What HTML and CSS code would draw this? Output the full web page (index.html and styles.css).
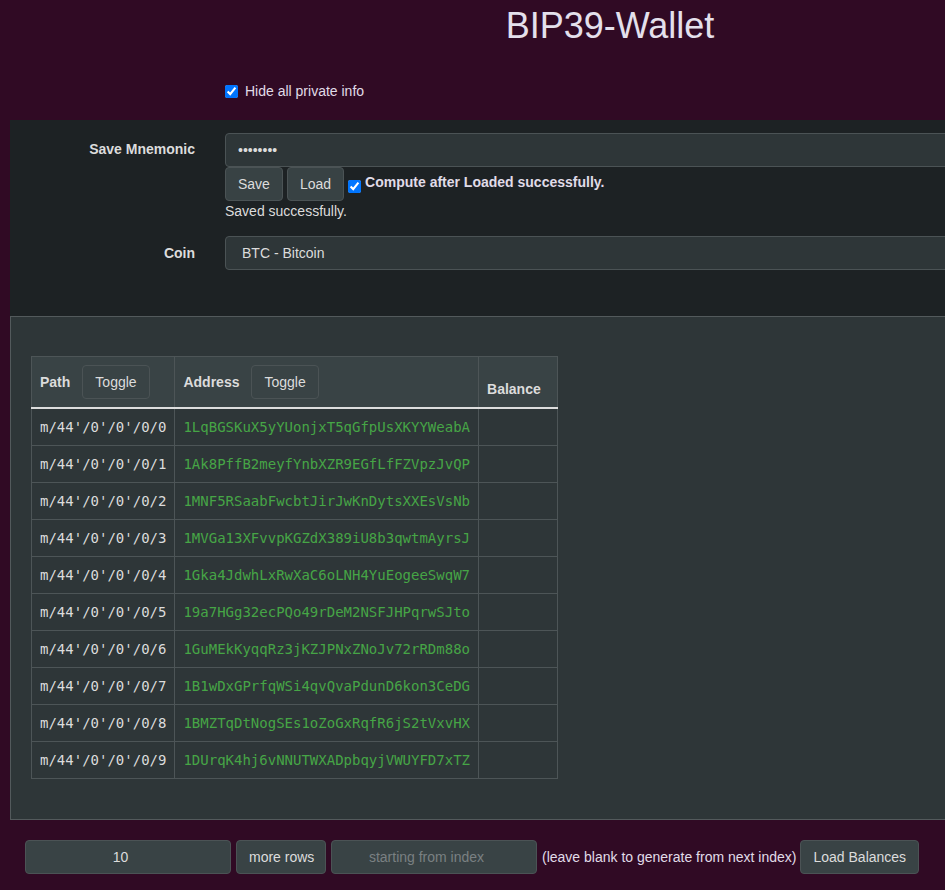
FILE: index.html
```html
<!DOCTYPE html>
<html>
<head>
<meta charset="utf-8">
<title>BIP39-Wallet</title>
<link rel="stylesheet" href="styles.css">
</head>
<body>
<div class="viewport">
  <div class="page">
    <h1 class="title">BIP39-Wallet</h1>
    <div class="hide-row">
      <label class="check"><input type="checkbox" checked>Hide all private info</label>
    </div>

    <div class="panel form-panel">
      <div class="form-row first">
        <div class="form-label">Save Mnemonic</div>
        <div class="field">
          <input class="control" type="password" value="password">
          <div class="actions">
            <button class="btn">Save</button>
            <button class="btn">Load</button>
            <label class="inline-check"><input type="checkbox" checked>Compute after Loaded successfully.</label>
          </div>
          <div class="status">Saved successfully.</div>
        </div>
      </div>
      <div class="form-row">
        <div class="form-label centered">Coin</div>
        <div class="field">
          <select class="control select">
            <option>BTC - Bitcoin</option>
          </select>
        </div>
      </div>
    </div>

    <div class="panel table-panel">
      <table class="addresses">
        <thead>
          <tr>
            <th class="col-path"><span class="th-label">Path</span><button class="btn toggle">Toggle</button></th>
            <th class="col-address"><span class="th-label">Address</span><button class="btn toggle">Toggle</button></th>
            <th class="col-balance">Balance</th>
          </tr>
        </thead>
        <tbody>
          <tr><td class="mono">m/44'/0'/0'/0/0</td><td class="mono addr">1LqBGSKuX5yYUonjxT5qGfpUsXKYYWeabA</td><td></td></tr>
          <tr><td class="mono">m/44'/0'/0'/0/1</td><td class="mono addr">1Ak8PffB2meyfYnbXZR9EGfLfFZVpzJvQP</td><td></td></tr>
          <tr><td class="mono">m/44'/0'/0'/0/2</td><td class="mono addr">1MNF5RSaabFwcbtJirJwKnDytsXXEsVsNb</td><td></td></tr>
          <tr><td class="mono">m/44'/0'/0'/0/3</td><td class="mono addr">1MVGa13XFvvpKGZdX389iU8b3qwtmAyrsJ</td><td></td></tr>
          <tr><td class="mono">m/44'/0'/0'/0/4</td><td class="mono addr">1Gka4JdwhLxRwXaC6oLNH4YuEogeeSwqW7</td><td></td></tr>
          <tr><td class="mono">m/44'/0'/0'/0/5</td><td class="mono addr">19a7HGg32ecPQo49rDeM2NSFJHPqrwSJto</td><td></td></tr>
          <tr><td class="mono">m/44'/0'/0'/0/6</td><td class="mono addr">1GuMEkKyqqRz3jKZJPNxZNoJv72rRDm88o</td><td></td></tr>
          <tr><td class="mono">m/44'/0'/0'/0/7</td><td class="mono addr">1B1wDxGPrfqWSi4qvQvaPdunD6kon3CeDG</td><td></td></tr>
          <tr><td class="mono">m/44'/0'/0'/0/8</td><td class="mono addr">1BMZTqDtNogSEs1oZoGxRqfR6jS2tVxvHX</td><td></td></tr>
          <tr><td class="mono">m/44'/0'/0'/0/9</td><td class="mono addr">1DUrqK4hj6vNNUTWXADpbqyjVWUYFD7xTZ</td><td></td></tr>
        </tbody>
      </table>
    </div>

    <div class="footer-row">
      <input class="control small center" type="number" value="10">
      <button class="btn more">more rows</button>
      <input class="control small center" type="number" placeholder="starting from index">
      <span class="hint">(leave blank to generate from next index)</span>
      <button class="btn load-bal">Load Balances</button>
    </div>
  </div>
</div>
</body>
</html>
```

FILE: styles.css
```css
html, body {
  margin: 0;
  padding: 0;
  background: #300a24;
}

body {
  font-family: "Liberation Sans", Arial, sans-serif;
  font-size: 14px;
  line-height: 20px;
  color: #dcdcdc;
}

.viewport {
  width: 100%;
  height: 890px;
  overflow: hidden;
}

.page {
  width: 1220px;
}

.title {
  margin: 6px 0 0;
  font-size: 36px;
  line-height: 40px;
  font-weight: normal;
  text-align: center;
  color: #e4e0ec;
}

.hide-row {
  margin-top: 35px;
  padding-left: 225px;
  height: 20px;
}

.check {
  display: inline-flex;
  align-items: center;
  color: #e0dce8;
}

.check input {
  margin: 0 7px 0 0;
  width: 13px;
  height: 13px;
}

.panel {
  margin: 0 10px;
}

.form-panel {
  margin-top: 19px;
  background: #1d2224;
  padding: 13px 0 46px;
}

.form-row {
  display: flex;
  margin-top: 15px;
}

.form-row.first {
  margin-top: 0;
}

.form-label {
  width: 185px;
  flex: none;
  text-align: right;
  font-weight: bold;
  padding-top: 6px;
  color: #dcdcdc;
}

.form-label.centered {
  padding-top: 7px;
}

.field {
  margin-left: 30px;
  flex: 1;
}

.control {
  box-sizing: border-box;
  display: block;
  width: 100%;
  height: 34px;
  padding: 6px 12px;
  background: #2e3638;
  border: 1px solid #4b5355;
  border-radius: 4px;
  color: #dcdcdc;
  font-family: "Liberation Sans", Arial, sans-serif;
  font-size: 14px;
  line-height: 20px;
  outline: none;
}

.select {
  -webkit-appearance: none;
  appearance: none;
  padding-left: 16px;
}

.btn {
  box-sizing: border-box;
  height: 34px;
  padding: 6px 12px;
  background: #384244;
  border: 1px solid #4b5355;
  border-radius: 4px;
  color: #dcdcdc;
  font-family: "Liberation Sans", Arial, sans-serif;
  font-size: 14px;
  line-height: 20px;
  white-space: nowrap;
  cursor: pointer;
}

.actions {
  display: flex;
  align-items: flex-start;
  gap: 4px;
}

.inline-check {
  display: inline-flex;
  align-items: flex-start;
  font-weight: bold;
  padding-top: 5px;
  color: #e0dce8;
}

.inline-check input {
  margin: 8px 4px 0 0;
  width: 13px;
  height: 13px;
}

.status {
  margin-top: 0;
}

.table-panel {
  background: #2e3638;
  border: 1px solid #535a5c;
  padding: 39px 20px 40px 20px;
}

.addresses {
  border-collapse: collapse;
  border: 1px solid #4d5557;
}

.addresses th,
.addresses td {
  border: 1px solid #4d5557;
  padding: 8px;
  text-align: left;
}

.addresses thead th {
  background: #394345;
  vertical-align: bottom;
  font-weight: bold;
  color: #dcdcdc;
  border-bottom: 2px solid #dddddd;
  white-space: nowrap;
}

.th-label {
  display: inline-block;
}

.toggle {
  margin-left: 12px;
  background: #394345;
}

.col-balance {
  width: 62px;
}

.addresses tbody td {
  height: 20px;
}

.mono {
  font-family: "DejaVu Sans Mono", "Liberation Mono", monospace;
  font-size: 14px;
  color: #dcdcdc;
  white-space: nowrap;
}

.addr {
  color: #46a546;
}

.footer-row {
  display: flex;
  align-items: center;
  gap: 5px;
  margin: 20px 0 0 25px;
}

.footer-row .control.small {
  width: 206px;
  background: #394345;
}

.footer-row .btn {
  background: #394345;
}

.footer-row .more {
  width: 90px;
  text-align: left;
}

.footer-row .load-bal {
  margin-left: -1px;
}

.center {
  text-align: center;
}

.control::placeholder {
  color: #7a8082;
}

.hint {
  color: #e0dce8;
  white-space: nowrap;
}
```
